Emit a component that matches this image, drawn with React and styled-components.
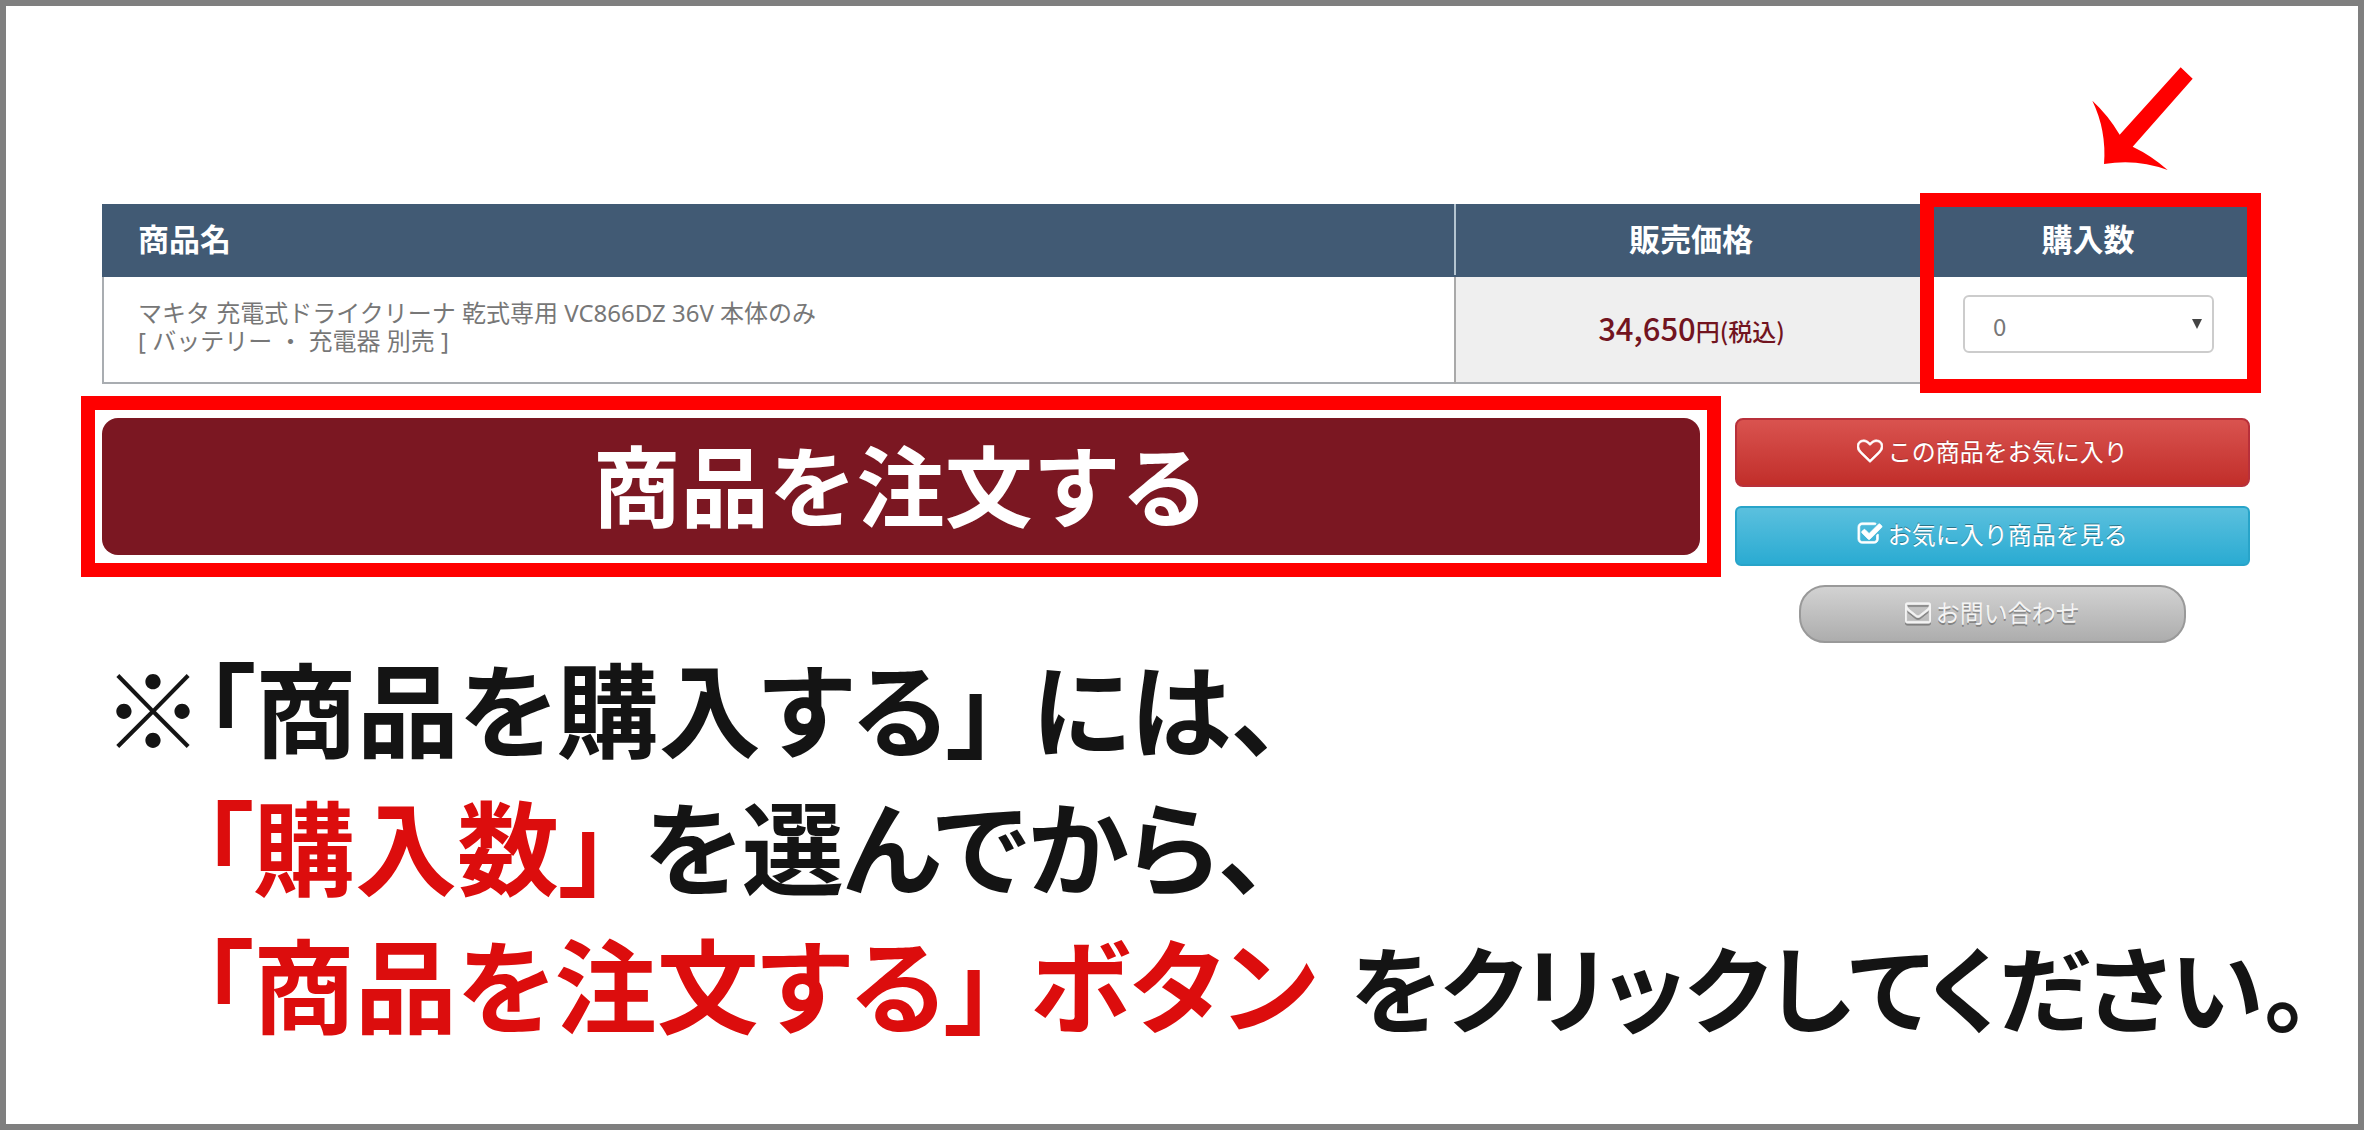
import styled, { createGlobalStyle, css } from 'styled-components';

const GlobalStyle = createGlobalStyle`
  * {
    box-sizing: border-box;
  }

  body {
    margin: 0;
    background: #fff;
    font-family: "Noto Sans CJK JP", sans-serif;
  }
`;

const ICONS = {
  heart:
    'M1664 596q0-81-21.5-143t-55-98.5-81.5-59.5-94-31-98-8-112 25.5-110.5 64-86.5 72-60 61.5q-18 22-49 22t-49-22q-24-28-60-61.5t-86.5-72-110.5-64-112-25.5-98 8-94 31-81.5 59.5-55 98.5-21.5 143q0 168 187 355l581 560 580-559q188-188 188-356zm128 0q0 221-229 450l-623 600q-18 18-44 18t-44-18l-624-602q-10-8-27.5-26t-55.5-65.5-68-97.5-53.5-121-23.5-138q0-220 127-344t351-124q62 0 126.5 21.5t120 58 95.5 68.5 76 68q36-36 76-68t95.5-68.5 120-58 126.5-21.5q224 0 351 124t127 344z',
  check:
    'M1472 930v318q0 119-84.5 203.5t-203.5 84.5h-832q-119 0-203.5-84.5t-84.5-203.5v-832q0-119 84.5-203.5t203.5-84.5h832q63 0 117 25 15 7 18 23 3 17-9 29l-49 49q-10 10-23 10-3 0-9-2-23-6-45-6h-832q-66 0-113 47t-47 113v832q0 66 47 113t113 47h832q66 0 113-47t47-113v-254q0-13 9-22l64-64q10-10 23-10 6 0 12 3 20 8 20 29zm231-489l-814 814q-24 24-57 24t-57-24l-430-430q-24-24-24-57t24-57l110-110q24-24 57-24t57 24l263 263 647-647q24-24 57-24t57 24l110 110q24 24 24 57t-24 57z',
  mail:
    'M1664 1504v-768q-32 36-69 66-268 206-426 338-51 43-83 67t-86.5 48.5-102.5 24.5h-2q-48 0-102.5-24.5t-86.5-48.5-83-67q-158-132-426-338-37-30-69-66v768q0 13 9.5 22.5t22.5 9.5h1472q13 0 22.5-9.5t9.5-22.5zm0-1051v-24.5l-.5-13-3-12.5-5.5-9-9-7.5-14-2.5h-1472q-13 0-22.5 9.5t-9.5 22.5q0 168 147 284 193 152 401 317 6 5 35 29.5t46 37.5 44.5 31.5 50.5 27.5 43 9h2q20 0 43-9t50.5-27.5 44.5-31.5 46-37.5 35-29.5q208-165 401-317 54-43 100.5-115.5t46.5-131.5zm128-37v1088q0 66-47 113t-113 47h-1472q-66 0-113-47t-47-113v-1088q0-66 47-113t113-47h1472q66 0 113 47t47 113z',
};

const Icon = ({ name }) => (
  <svg viewBox="0 0 1792 1792" width="26" height="26" fill="currentColor" stroke="currentColor" strokeWidth="50" aria-hidden="true">
    <path d={ICONS[name]} />
  </svg>
);

const App = () => {
  return (
    <>
      <GlobalStyle />
      <Page>
        <ArrowRow>
          <svg viewBox="577 80 301 309" width="101" height="103" fill="#f00" aria-hidden="true">
            <path d="M842 81L878 115L698 319Q755 346 803 389Q710 354 612 371Q620 270 577 181Q625 225 659 283Z" />
          </svg>
        </ArrowRow>

        <TableWrap>
          <ProductTable>
            <thead>
              <tr>
                <HeadCell $width="63%" $align="left">商品名</HeadCell>
                <HeadCell $width="22%">販売価格</HeadCell>
                <HeadCell $width="15%">購入数</HeadCell>
              </tr>
            </thead>
            <tbody>
              <tr>
                <NameCell>
                  マキタ 充電式ドライクリーナ 乾式専用 VC866DZ 36V 本体のみ
                  <br />[ バッテリー ・ 充電器 別売 ]
                </NameCell>
                <PriceCell>
                  <Amount>34,650</Amount>円(税込)
                </PriceCell>
                <QuantityCell>
                  <SelectBox>
                    <Select aria-label="購入数" defaultValue="0">
                      {[0, 1, 2, 3, 4, 5].map((n) => (
                        <option key={n} value={n}>{n}</option>
                      ))}
                    </Select>
                    <Caret viewBox="0 0 10 10" aria-hidden="true">
                      <path d="M0 0H10L5 10Z" />
                    </Caret>
                  </SelectBox>
                </QuantityCell>
              </tr>
            </tbody>
          </ProductTable>
          <QuantityMark />
        </TableWrap>

        <Actions>
          <OrderMark>
            <OrderButton type="button">商品を注文する</OrderButton>
          </OrderMark>
          <SideButtons>
            <SideButton type="button" $variant="danger">
              <Icon name="heart" />この商品をお気に入り
            </SideButton>
            <SideButton type="button" $variant="info">
              <Icon name="check" />お気に入り商品を見る
            </SideButton>
            <SideButton type="button" $variant="muted">
              <Icon name="mail" />お問い合わせ
            </SideButton>
          </SideButtons>
        </Actions>

        <Guide>
          <GuideLine>
            <span>※「商品を購入する」</span>
            <span>には、</span>
          </GuideLine>
          <GuideLine $indent>
            <Strong>「購入数」</Strong>
            <span>を選んでから、</span>
          </GuideLine>
          <GuideLine $indent>
            <Strong>「商品を注文する」</Strong>
            <Strong>ボタン</Strong>
            <Ending>をクリックしてください。</Ending>
          </GuideLine>
        </Guide>
      </Page>
    </>
  );
};

const Page = styled.main`
  min-height: 100vh;
  padding: 61px 108px 40px 96px;
  border: 6px solid #7f7f7f;
  background: #fff;
  overflow: hidden;
`;

const ArrowRow = styled.div`
  display: flex;
  justify-content: flex-end;
  padding: 0 57px 34px 0;

  svg {
    display: block;
  }
`;

const TableWrap = styled.div`
  position: relative;
`;

const ProductTable = styled.table`
  width: 100%;
  table-layout: fixed;
  border-collapse: collapse;
  border: 2px solid #a9adb1;
`;

const HeadCell = styled.th`
  width: ${({ $width }) => $width};
  height: 71px;
  padding: 0 34px 6px;
  border: 2px solid #415a74;
  border-right-color: #b4c4d0;
  background: #415a74;
  color: #fff;
  font-size: 31px;
  line-height: 36px;
  font-weight: 700;
  text-align: ${({ $align }) => $align || 'center'};

  & + & {
    border-left-color: #b4c4d0;
  }

  &:last-child {
    border-right-color: #415a74;
  }
`;

const NameCell = styled.td`
  height: 107px;
  padding: 0 34px 6px;
  border-right: 2px solid #a9a9a9;
  color: #777;
  font-family: "Noto Sans", "Noto Sans CJK JP", sans-serif;
  font-size: 24px;
  line-height: 28px;
`;

const PriceCell = styled.td`
  padding: 0;
  background: #efefef;
  color: #72141f;
  font-size: 24px;
  line-height: 36px;
  font-weight: 500;
  text-align: center;
`;

const Amount = styled.span`
  font-size: 31px;
`;

const QuantityCell = styled.td`
  padding: 18px 34px 0 36px;
  vertical-align: top;
`;

const SelectBox = styled.div`
  position: relative;
`;

const Select = styled.select`
  display: block;
  width: 100%;
  height: 58px;
  padding: 2px 28px 0;
  border: 2px solid #ccc;
  border-radius: 6px;
  appearance: none;
  background: #fff;
  color: #777;
  font-family: inherit;
  font-size: 24px;
`;

const Caret = styled.svg`
  position: absolute;
  top: 24px;
  right: 12px;
  width: 10px;
  height: 10px;
  fill: #444;
  pointer-events: none;
`;

/* Red outline over the quantity column, header included */
const QuantityMark = styled.div`
  position: absolute;
  top: -11px;
  right: -11px;
  bottom: -9px;
  width: calc(15% + 19px);
  border: 14px solid #f00;
  pointer-events: none;
`;

const Actions = styled.div`
  display: grid;
  grid-template-columns: 35fr 11fr;
  align-items: start;
  gap: 14px;
  margin: 12px 0 0 -21px;
`;

const OrderMark = styled.div`
  padding: 8px 7px;
  border: 14px solid #f00;
`;

const OrderButton = styled.button`
  display: block;
  width: 100%;
  height: 137px;
  padding: 0 0 10px;
  border: 0;
  border-radius: 16px;
  background: #7b1722;
  color: #fff;
  font-family: inherit;
  font-size: 88px;
  line-height: 100px;
  font-weight: 700;
  cursor: pointer;
`;

const SideButtons = styled.div`
  display: flex;
  flex-direction: column;
  align-items: center;
  gap: 19px;
  padding-top: 22px;
`;

const variants = {
  danger: css`
    height: 69px;
    border-color: #b8303a;
    border-radius: 8px;
    background: linear-gradient(#d9534f, #c12e2a);
    text-shadow: 0 -1px 0 rgba(0, 0, 0, 0.2);
  `,
  info: css`
    height: 60px;
    border-color: #28a4c9;
    border-radius: 6px;
    background: linear-gradient(#5bc0de, #2aabd2);
    text-shadow: 0 -1px 0 rgba(0, 0, 0, 0.4);
  `,
  muted: css`
    width: 75%;
    height: 58px;
    border-color: #999;
    border-radius: 26px;
    background: linear-gradient(#d2d2d2, #adadad);
    color: #f4f4f4;
    text-shadow: 0 2px 0 rgba(0, 0, 0, 0.3);

    svg {
      filter: drop-shadow(0 2px 0 rgba(0, 0, 0, 0.3));
    }
  `,
};

const SideButton = styled.button`
  display: flex;
  align-items: center;
  justify-content: center;
  gap: 5px;
  width: 100%;
  padding: 0 0 4px;
  border: 2px solid;
  color: #fff;
  font-family: inherit;
  font-size: 24px;
  line-height: 36px;
  cursor: pointer;
  ${({ $variant }) => variants[$variant]}
`;

const Guide = styled.div`
  margin-top: -6px;
  color: #141414;
  font-size: 102px;
  line-height: 138px;
  font-weight: 700;
  font-feature-settings: "palt";
  white-space: nowrap;
`;

const GuideLine = styled.p`
  display: flex;
  align-items: baseline;
  gap: 34px;
  margin: 0;
  padding-left: ${({ $indent }) => ($indent ? '100px' : '0')};
`;

const Strong = styled.strong`
  color: #dc0d0d;
  font-weight: 700;
`;

const Ending = styled.span`
  font-size: 94px;
`;

export default App;
